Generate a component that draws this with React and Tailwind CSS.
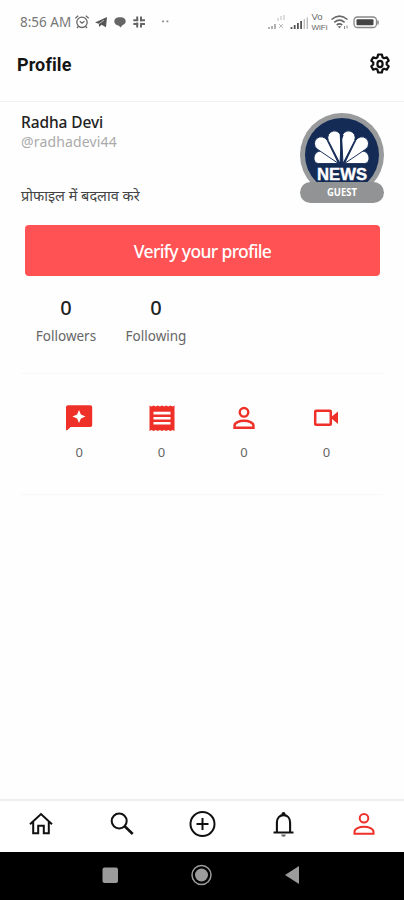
import React from 'react';

function GearIcon() {
  return (
    <svg width="22" height="22" viewBox="0 0 22 22" fill="none" stroke="#111" strokeWidth="2.200" strokeLinejoin="round">
      <path d="M9.100 1.500h3.800l.6 2.700 1.600 1 2.700-.9 1.900 3.300-2 1.900v2l2 1.900-1.900 3.300-2.700-.9-1.600 1-.6 2.700H9.100l-.6-2.700-1.600-1-2.700.9-1.900-3.300 2-1.900v-2l-2-1.900 1.900-3.300 2.700.9 1.600-1z" />
      <ellipse cx="11" cy="11" rx="2.600" ry="3.200" />
    </svg>
  );
}

function ReviewIcon() {
  return (
    <svg width="28" height="28" viewBox="0 0 28 28">
      <path d="M3 1.200h22.200a2 2 0 0 1 2 2v17.900a2 2 0 0 1-2 2H5.500L2.500 26c-.6.6-1.500.3-1.500-.6V3.200a2 2 0 0 1 2-2z" fill="#ee3028" />
      <path d="m14 6 1.900 4.600 4.600 1.900-4.600 1.900L14 19l-1.900-4.600-4.600-1.900 4.600-1.900z" fill="#fff" />
    </svg>
  );
}

function ArticleIcon() {
  return (
    <svg width="28" height="28" viewBox="0 0 28 28">
      <path d="m1.500 1.500 2 1 2.100-1 2.100 1 2.100-1 2.100 1 2.100-1 2.100 1 2.100-1 2.100 1 2.100-1 2.100 1 2-1v25.500l-2-1-2.100 1-2.100-1-2.100 1-2.100-1-2.100 1-2.100-1-2.100 1-2.100-1-2.100 1-2.100-1-2 1z" fill="#ee3028" />
      <path d="M5.500 9.100h17M5.500 14.200h17M5.500 19.300h17" stroke="#fff" strokeWidth="2.600" />
    </svg>
  );
}

function PersonIcon({ thick }) {
  return (
    <svg width="28" height="28" viewBox="0 0 28 28" fill="none" stroke="#ee3028" strokeWidth={thick ? 2.4 : 2}>
      <circle cx="14" cy="8.300" r="4.300" />
      <path d="M4.500 23.800v-2c0-3 4.800-5 9.500-5s9.500 2 9.500 5v2z" />
    </svg>
  );
}

function VideoIcon() {
  return (
    <svg width="28" height="28" viewBox="0 0 28 28">
      <rect x="3.200" y="6.700" width="15.600" height="14" rx="0.800" fill="none" stroke="#ee3028" strokeWidth="2.500" />
      <path d="M19.500 12.800 26 7.500v12.400l-6.500-5.300z" fill="#ee3028" />
    </svg>
  );
}

function HomeIcon() {
  return (
    <svg width="28" height="28" viewBox="0 0 28 28" fill="none" stroke="#111" strokeWidth="2">
      <path d="M3 14.200 14 4l11 10.200M6.200 12v11.300h5v-7.600h5.600v7.600h5V12" />
    </svg>
  );
}

function SearchIcon() {
  return (
    <svg width="28" height="28" viewBox="0 0 28 28" fill="none" stroke="#111">
      <circle cx="11.200" cy="11" r="7.500" strokeWidth="2" />
      <path d="m16.700 16.300 8 7.700" strokeWidth="2.600" />
    </svg>
  );
}

function AddIcon() {
  return (
    <svg width="28" height="28" viewBox="0 0 28 28" fill="none" stroke="#111" strokeWidth="2">
      <circle cx="14.500" cy="14" r="12" />
      <path d="M14.500 8v12M8.500 14h12" />
    </svg>
  );
}

function BellIcon() {
  return (
    <svg width="28" height="28" viewBox="0 0 28 28">
      <path d="M7.900 22v-9.500c0-4.500 2.800-7.400 6.600-7.400s6.600 2.900 6.600 7.400V22" fill="none" stroke="#111" strokeWidth="2.100" />
      <path d="M4.500 22.500h20" stroke="#111" strokeWidth="2" />
      <circle cx="14.500" cy="4" r="2" fill="#111" />
      <path d="M12.200 24.500h4.600a2.300 2.300 0 0 1-4.600 0z" fill="#666" />
    </svg>
  );
}

const stats = [
  { id: 'reviews', icon: <ReviewIcon />, count: 0 },
  { id: 'articles', icon: <ArticleIcon />, count: 0 },
  { id: 'people', icon: <PersonIcon thick />, count: 0 },
  { id: 'videos', icon: <VideoIcon />, count: 0 },
];

const tabs = [
  { id: 'home', icon: <HomeIcon /> },
  { id: 'search', icon: <SearchIcon /> },
  { id: 'add', icon: <AddIcon /> },
  { id: 'alerts', icon: <BellIcon /> },
  { id: 'profile', icon: <PersonIcon /> },
];

function StatusBar() {
  return (
    <div className="flex h-11 items-center pl-5 pr-6 text-[#777]">
      <span className="w-[54px] whitespace-nowrap font-['Noto_Sans',sans-serif] text-[13.5px]">8:56 AM</span>
      <svg width="98" height="18" viewBox="0 0 98 18" fill="none" stroke="#666">
        {/* alarm clock */}
        <circle cx="8" cy="9.300" r="5.200" strokeWidth="1.300" />
        <path d="M5.800 8.300 8 10.300l2.500-2M1.300 5.200 4.200 2.800M14.700 5.200l-2.900-2.400M4.300 13.500 3 15M11.700 13.500 13 15" strokeWidth="1.200" />
        {/* paper plane */}
        <path d="M21 9.500 33 4l-1 10.200-4.500-2.500-2.300 2.200-.4-3.200z" fill="#555" stroke="none" />
        <path d="m25 10.700 5-3.500" stroke="#ddd" strokeWidth=".7" />
        {/* chat */}
        <path d="M46 4.200c3.500 0 5.700 1.500 5.700 4 0 2.100-1.500 3.300-3 3.900L46.500 14.500l-1.500-1.800c-2.700-.4-4.700-2-4.700-4.500 0-2.500 2.300-4 5.700-4z" fill="#666" stroke="none" />
        {/* slack style mark */}
        <path d="M63.200 3.500v4.200M67 3.500v5M63.200 9.500v5M67 10.500v4M59.300 7.200h5M66 7.200h5M59.300 10.900h5M66 10.900h5" strokeWidth="2" />
        <path d="M88.200 8.400h1.800M92.500 8.400h1.800" stroke="#888" strokeWidth="1.700" />
      </svg>
      <svg className="ml-auto" width="115" height="20" viewBox="0 0 115 20" fill="none">
        {/* first sim, no service */}
        <path d="M4 17v-2M7 17v-3M10 17v-5" stroke="#999" strokeWidth="1.500" />
        <path d="M13 9V6M16 8V4M19 8V3" stroke="#ccc" strokeWidth="1.300" />
        <path d="m14 12 4 4m0-4-4 4" stroke="#bbb" strokeWidth="1" />
        {/* second sim */}
        <path d="M26.500 17v-2M29.700 17v-4M32.900 17v-6M36.100 17V9" stroke="#555" strokeWidth="1.800" />
        <path d="M39.300 17V7M42.300 17V5.500" stroke="#bbb" strokeWidth="1.300" />
        <text x="46.500" y="7.800" fontSize="9.500" fill="#666" fontFamily="Liberation Sans, sans-serif">Vo</text>
        <text x="46.500" y="17.800" fontSize="8" fill="#666" fontFamily="Liberation Sans, sans-serif">WiFi</text>
        {/* wifi */}
        <path d="M66.500 7.500c5-4.300 11-4.300 16 0M69.300 10.300c3.300-2.700 7-2.700 10.300 0M71.700 13c1.800-1.400 3.700-1.400 5.500 0" stroke="#666" strokeWidth="1.600" />
        <path d="m72.700 14.200 1.800 2.200 1.800-2.200z" fill="#666" />
        <path d="M79.500 17v-3M82 13.500v3" stroke="#888" strokeWidth="1" />
        {/* battery */}
        <rect x="89" y="5" width="22.500" height="10.500" rx="3.500" stroke="#888" strokeWidth="1.300" />
        <rect x="91.500" y="7.200" width="17" height="6.100" rx="1" fill="#444" />
        <path d="M113 8.500v4" stroke="#888" strokeWidth="1.500" />
      </svg>
    </div>
  );
}

const petal = 'M0 0-6.700-25A6.800 7 0 1 1 6.700-25z';

function Avatar() {
  return (
    <svg width="86" height="92" viewBox="0 0 86 92">
      <circle cx="43" cy="43" r="42" fill="#989a9c" />
      <circle cx="43" cy="43" r="37" fill="#142b56" />
      <g fill="#fff" stroke="#142b56" strokeWidth=".9">
        <path d="M39 51.500H19.500c-6.500 0-6-12 2-12.500 6-.3 12 5.500 17.500 12.500z" />
        <path d={petal} transform="translate(39.500 51.500) rotate(-41)" />
        <path d={petal} transform="translate(41 51.500) rotate(-12)" />
        <path d="M46 51.500h19.500c6.500 0 6-12-2-12.500-6-.3-12 5.500-17.500 12.500z" />
        <path d={petal} transform="translate(45.500 51.500) rotate(41)" />
        <path d={petal} transform="translate(44 51.500) rotate(12)" />
      </g>
      <path d="m40.700 21 4 2-1.700 4.500V53h-1z" fill="#142b56" />
      <text x="18" y="67.500" fontSize="17" fontWeight="700" fill="#fff" stroke="#fff" strokeWidth=".4" textLength="50" lengthAdjust="spacingAndGlyphs" fontFamily="Liberation Sans, sans-serif">NEWS</text>
      <rect x="1" y="70" width="84" height="21" rx="10.500" fill="#929394" />
      <text x="43" y="84" fontSize="10" fontWeight="700" fill="#fff" textAnchor="middle" textLength="30" lengthAdjust="spacingAndGlyphs" fontFamily="Noto Sans, sans-serif">GUEST</text>
    </svg>
  );
}

function Counter({ value, label }) {
  return (
    <div className="flex w-[90px] flex-col items-center">
      <span className="text-xl font-medium leading-7 text-[#222]">{value}</span>
      <span className="text-[13.5px] leading-7 text-[#666]">{label}</span>
    </div>
  );
}

export default function App() {
  return (
    <div className="flex h-[900px] w-[404px] flex-col overflow-hidden bg-[#fefefe] font-['Noto_Sans',sans-serif]">
      <StatusBar />

      <header className="flex h-[58px] shrink-0 items-start justify-between border-b border-[#f1f1f1] pl-[17px] pr-[13px] pt-[9px]">
        <h1 className="font-['Roboto',sans-serif] text-lg font-bold leading-6 tracking-[0.1px] text-[#151515]">Profile</h1>
        <GearIcon />
      </header>

      <section className="flex h-[123px] shrink-0 justify-between pl-[21px] pr-[19px] pt-[10px]">
        <div className="flex flex-col">
          <span className="text-[15.5px] font-medium leading-5 tracking-[-0.1px] text-[#222]">Radha Devi</span>
          <span className="text-[14px] leading-5 tracking-[0.15px] text-[#aaa]">@radhadevi44</span>
          <span className="mt-[31px] whitespace-nowrap text-[14.5px] leading-6 text-[#444]">प्रोफाइल में बदलाव करे</span>
        </div>
        <Avatar />
      </section>

      <button className="ml-[25px] mr-6 h-[51px] shrink-0 rounded-[4px] bg-[#ff5254] pt-0.5 text-[17.5px] font-medium tracking-[-0.65px] text-white">
        Verify your profile
      </button>

      <section className="mx-[21px] flex h-[98px] shrink-0 border-b border-[#f7f7f7] pt-[18px]">
        <Counter value={0} label="Followers" />
        <Counter value={0} label="Following" />
      </section>

      <section className="mx-[21px] flex h-[121px] shrink-0 border-b border-[#f7f7f7] pl-[17px] pt-[30px]">
        {stats.map(({ id, icon, count }) => (
          <div key={id} className="flex w-[82.4px] flex-col items-center">
            {icon}
            <span className="mt-[10px] text-[13px] leading-5 text-[#666]">{count}</span>
          </div>
        ))}
      </section>

      <div className="flex-1" />

      <nav className="grid h-[53px] shrink-0 grid-cols-5 border-t-2 border-[#eee] bg-white pl-px pt-[9px]">
        {tabs.map(({ id, icon }) => (
          <div key={id} className="flex justify-center">
            {icon}
          </div>
        ))}
      </nav>

      <div className="flex h-12 shrink-0 items-center justify-center bg-black">
        <svg width="200" height="24" viewBox="0 0 200 24" fill="#9b9b9b">
          <rect x="0.500" y="3.500" width="15.500" height="15.500" rx="2" />
          <circle cx="99.500" cy="11" r="6.500" />
          <circle cx="99.500" cy="11" r="9.500" fill="none" stroke="#9b9b9b" strokeWidth="1.500" />
          <path d="M183 11 197 2v18z" />
        </svg>
      </div>
    </div>
  );
}
